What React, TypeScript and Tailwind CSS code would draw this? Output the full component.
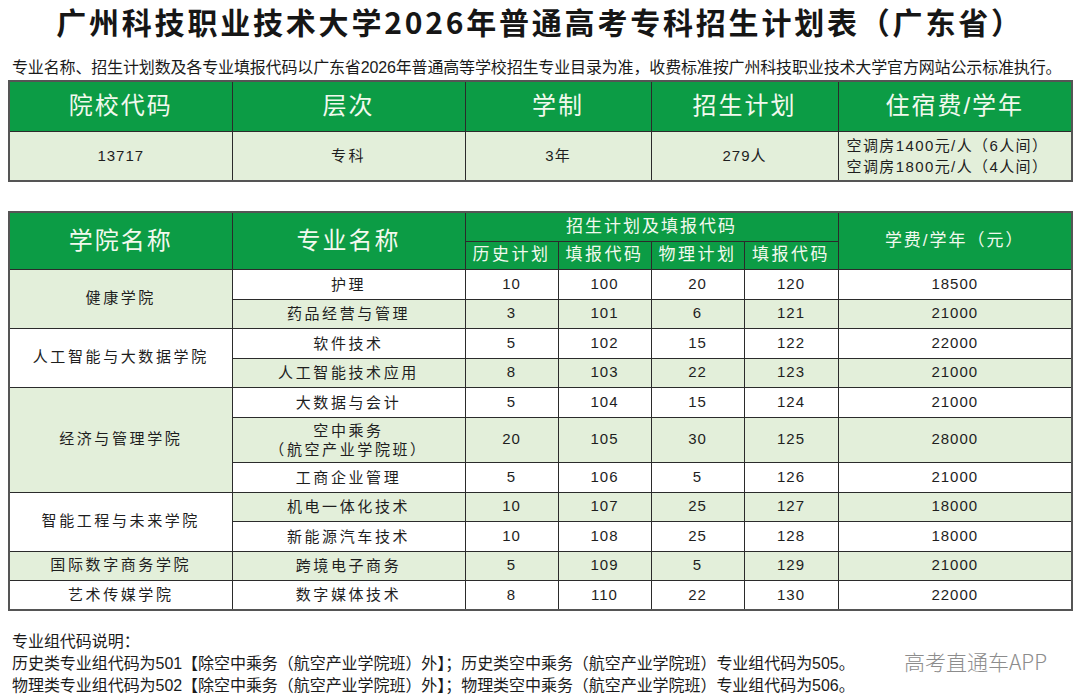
import React from "react";

type Major = [string, number, number, number, number, number];

const colleges: { name: string; majors: Major[] }[] = [
  {
    name: "健康学院",
    majors: [
      ["护理", 10, 100, 20, 120, 18500],
      ["药品经营与管理", 3, 101, 6, 121, 21000],
    ],
  },
  {
    name: "人工智能与大数据学院",
    majors: [
      ["软件技术", 5, 102, 15, 122, 22000],
      ["人工智能技术应用", 8, 103, 22, 123, 21000],
    ],
  },
  {
    name: "经济与管理学院",
    majors: [
      ["大数据与会计", 5, 104, 15, 124, 21000],
      ["空中乘务\n（航空产业学院班）", 20, 105, 30, 125, 28000],
      ["工商企业管理", 5, 106, 5, 126, 21000],
    ],
  },
  {
    name: "智能工程与未来学院",
    majors: [
      ["机电一体化技术", 10, 107, 25, 127, 18000],
      ["新能源汽车技术", 10, 108, 25, 128, 18000],
    ],
  },
  {
    name: "国际数字商务学院",
    majors: [["跨境电子商务", 5, 109, 5, 129, 21000]],
  },
  {
    name: "艺术传媒学院",
    majors: [["数字媒体技术", 8, 110, 22, 130, 22000]],
  },
];

const font = "font-['Liberation_Sans','Noto_Sans_CJK_SC',sans-serif]";
const cell = "border border-[#2b2b2b] text-center align-middle p-0";
const head = `${cell} bg-[#0c9c45] text-[#f2f9ee] font-normal`;
const green = "bg-[#e3efda]";
const num = "text-[15px] tracking-[1px] text-[#1e1e1e]";
const cjk = "text-[15px] tracking-[2.6px] text-[#1e1e1e]";

const App: React.FC = () => {
  let rowIdx = 0;
  return (
    <div className={`relative w-[1080px] h-[700px] overflow-hidden bg-white ${font}`}>
      <h1 className="pt-[3px] text-center text-[30px] leading-[36px] font-bold tracking-[2.8px] text-[#161616] font-['Noto_Sans_CJK_SC',sans-serif]">
        广州科技职业技术大学2026年普通高考专科招生计划表（广东省）
      </h1>
      <p className="mt-[18px] pl-[12px] text-[16px] leading-[22px] tracking-[-0.15px] text-[#1a1a1a] whitespace-nowrap">
        专业名称、招生计划数及各专业填报代码以广东省2026年普通高等学校招生专业目录为准，收费标准按广州科技职业技术大学官方网站公示标准执行。
      </p>

      {/* 院校基本信息 */}
      <table className="mt-[1px] ml-[8px] w-[1063px] table-fixed border-collapse border-2 border-[#555]">
        <colgroup>
          <col className="w-[223px]" />
          <col className="w-[233px]" />
          <col className="w-[186px]" />
          <col className="w-[187px]" />
          <col className="w-[234px]" />
        </colgroup>
        <thead>
          <tr className="h-[50px]">
            {["院校代码", "层次", "学制", "招生计划", "住宿费/学年"].map((t) => (
              <th key={t} className={`${head} text-[24px] tracking-[2px]`}>
                {t}
              </th>
            ))}
          </tr>
        </thead>
        <tbody>
          <tr className={`h-[50px] ${green}`}>
            <td className={`${cell} ${num}`}>13717</td>
            <td className={`${cell} ${cjk}`}>专科</td>
            <td className={`${cell} ${num}`}>3年</td>
            <td className={`${cell} ${num}`}>279人</td>
            <td className={`${cell} text-left pl-[8px] text-[15px] leading-[21px] tracking-[1.4px] text-[#1e1e1e]`}>
              <div>空调房1400元/人（6人间）</div>
              <div>空调房1800元/人（4人间）</div>
            </td>
          </tr>
        </tbody>
      </table>

      {/* 专业计划 */}
      <table className="mt-[29px] ml-[8px] w-[1063px] table-fixed border-collapse border-2 border-[#555]">
        <colgroup>
          <col className="w-[223px]" />
          <col className="w-[233px]" />
          <col className="w-[93px]" />
          <col className="w-[93px]" />
          <col className="w-[93px]" />
          <col className="w-[94px]" />
          <col className="w-[234px]" />
        </colgroup>
        <thead>
          <tr className="h-[29px]">
            <th rowSpan={2} className={`${head} text-[24px] tracking-[2px]`}>学院名称</th>
            <th rowSpan={2} className={`${head} text-[24px] tracking-[2px]`}>专业名称</th>
            <th colSpan={4} className={`${head} text-[17px] tracking-[2px]`}>招生计划及填报代码</th>
            <th rowSpan={2} className={`${head} text-[17px] tracking-[2px]`}>学费/学年（元）</th>
          </tr>
          <tr className="h-[28px]">
            {["历史计划", "填报代码", "物理计划", "填报代码"].map((t, i) => (
              <th key={i} className={`${head} text-[17px] tracking-[2.5px]`}>
                {t}
              </th>
            ))}
          </tr>
        </thead>
        <tbody>
          {colleges.map((c, ci) =>
            c.majors.map((m, mi) => {
              const idx = rowIdx++;
              const bg = idx % 2 === 1 ? green : "bg-white";
              const tall = m[0].includes("\n");
              const h = tall ? "h-[45px]" : idx % 2 === 0 ? "h-[30px]" : "h-[29px]";
              return (
                <tr key={m[0]} className={h}>
                  {mi === 0 && (
                    <td
                      rowSpan={c.majors.length}
                      className={`${cell} ${cjk} ${ci % 2 === 0 ? green : "bg-white"}`}
                    >
                      {c.name}
                    </td>
                  )}
                  <td className={`${cell} ${cjk} ${bg} whitespace-pre-line leading-[19px]`}>{m[0]}</td>
                  {m.slice(1).map((v, i) => (
                    <td key={i} className={`${cell} ${num} ${bg}`}>
                      {v}
                    </td>
                  ))}
                </tr>
              );
            })
          )}
        </tbody>
      </table>

      <div className="mt-[20px] pl-[12px] text-[16px] leading-[22px] tracking-[-0.05px] text-[#1a1a1a] whitespace-nowrap">
        <p>专业组代码说明：</p>
        <p>历史类专业组代码为501【除空中乘务（航空产业学院班）外】；历史类空中乘务（航空产业学院班）专业组代码为505。</p>
        <p>物理类专业组代码为502【除空中乘务（航空产业学院班）外】；物理类空中乘务（航空产业学院班）专业组代码为506。</p>
      </div>

      <span className="absolute left-[904px] top-[647px] text-[21px] leading-[28px] font-light text-[#8c8c8c] font-['Noto_Sans_CJK_SC',sans-serif]">
        高考直通车APP
      </span>
    </div>
  );
};

export default App;
